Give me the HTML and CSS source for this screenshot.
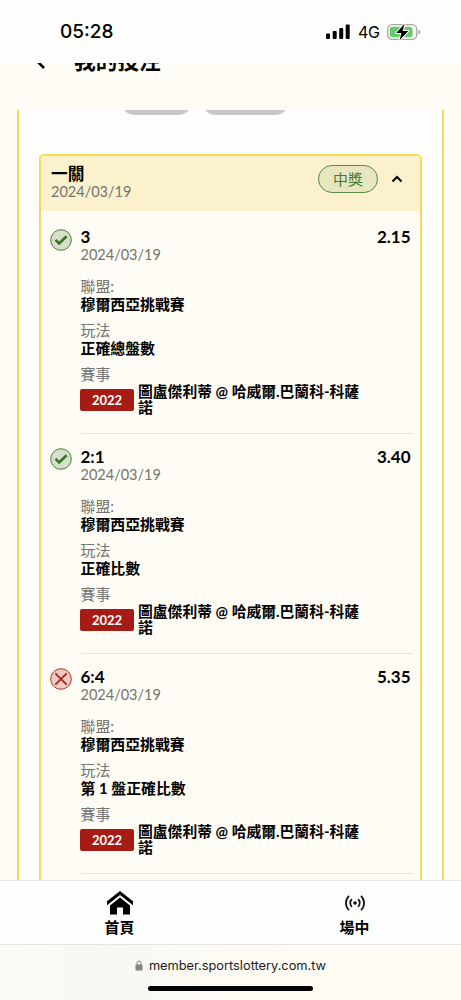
FILE: index.html
```html
<!DOCTYPE html>
<html lang="zh-Hant">
<head>
<meta charset="utf-8">
<meta name="viewport" content="width=device-width, initial-scale=1">
<title>我的投注</title>
<link rel="stylesheet" href="styles.css">
</head>
<body>
<div class="phone">
  <header class="status">
    <span class="clock">05:28</span>
    <div class="indicators">
      <svg class="signal" viewBox="0 0 24 16"><rect x="0" y="9.500" width="4" height="5.500" rx="1"/><rect x="6.700" y="7" width="4" height="8" rx="1"/><rect x="13.200" y="4" width="4" height="11" rx="1"/><rect x="19.700" y="0.500" width="4" height="14.500" rx="1"/></svg>
      <span class="network">4G</span>
      <svg class="battery" viewBox="0 0 34 18"><rect x="0.700" y="1.700" width="29" height="14.600" rx="4.600" fill="none" stroke="#a9a9a9" stroke-width="1.300"/><path d="M31.300 6.500c2.700.7 2.700 4.300 0 5z" fill="#a9a9a9"/><rect x="2.700" y="3.700" width="22.800" height="10.600" rx="2.800" fill="#67ca68"/><path d="M17.500.8 9.200 10h5.200l-1.800 7.200L21.300 8h-5.600z" fill="#000" stroke="#fff" stroke-width="2" paint-order="stroke" stroke-linejoin="round"/></svg>
    </div>
  </header>
  <div class="titlebar">
    <svg class="back" viewBox="0 0 12 18"><path d="M10 2 3 9l7 7" fill="none" stroke="#000" stroke-width="2.600"/></svg>
    <h1>我的投注</h1>
  </div>
  <main class="content">
    <div class="panel">
      <div class="filters"><span class="chip chip-a"></span><span class="chip chip-b"></span></div>
      <section class="card">
        <div class="card-head">
          <div><div class="leg">一關</div><div class="date">2024/03/19</div></div>
          <span class="won">中獎</span>
          <svg class="chevron" viewBox="0 0 12 8"><path d="M1.500 6.500 6 2l4.500 4.500" fill="none" stroke="#000" stroke-width="2"/></svg>
        </div>
        <div class="bets">
          <article class="bet">
            <svg class="mark" viewBox="0 0 22 22"><circle cx="11" cy="11" r="10.300" fill="#d5dfcb" stroke="#4a8139"/><path d="m5.500 10.800 3.700 3.700 7.400-7.300" fill="none" stroke="#397322" stroke-width="2.600"/></svg>
            <div class="detail">
              <div class="pick"><b>3</b><b class="odds">2.15</b></div>
              <div class="date">2024/03/19</div>
              <dl><dt>聯盟:</dt><dd>穆爾西亞挑戰賽</dd><dt>玩法</dt><dd>正確總盤數</dd><dt>賽事</dt></dl>
              <div class="match"><span class="code">2022</span><p>圖盧傑利蒂 @ 哈威爾.巴蘭科-科薩<br>諾</p></div>
            </div>
          </article>
          <article class="bet">
            <svg class="mark" viewBox="0 0 22 22"><circle cx="11" cy="11" r="10.300" fill="#d5dfcb" stroke="#4a8139"/><path d="m5.500 10.800 3.700 3.700 7.400-7.300" fill="none" stroke="#397322" stroke-width="2.600"/></svg>
            <div class="detail">
              <div class="pick"><b>2:1</b><b class="odds">3.40</b></div>
              <div class="date">2024/03/19</div>
              <dl><dt>聯盟:</dt><dd>穆爾西亞挑戰賽</dd><dt>玩法</dt><dd>正確比數</dd><dt>賽事</dt></dl>
              <div class="match"><span class="code">2022</span><p>圖盧傑利蒂 @ 哈威爾.巴蘭科-科薩<br>諾</p></div>
            </div>
          </article>
          <article class="bet">
            <svg class="mark" viewBox="0 0 22 22"><circle cx="11" cy="11" r="10.300" fill="#eccbc3" stroke="#b53831"/><path d="m5.300 5.300 11.400 11.400m0-11.400L5.300 16.700" fill="none" stroke="#ac241d" stroke-width="1.800"/></svg>
            <div class="detail">
              <div class="pick"><b>6:4</b><b class="odds">5.35</b></div>
              <div class="date">2024/03/19</div>
              <dl><dt>聯盟:</dt><dd>穆爾西亞挑戰賽</dd><dt>玩法</dt><dd>第 1 盤正確比數</dd><dt>賽事</dt></dl>
              <div class="match"><span class="code">2022</span><p>圖盧傑利蒂 @ 哈威爾.巴蘭科-科薩<br>諾</p></div>
            </div>
          </article>
        </div>
      </section>
    </div>
  </main>
  <nav class="tabs">
    <a class="tab">
      <svg class="home" viewBox="0 0 26 24"><path d="M13 0 26 10.200v4L13 4 0 14.200v-4z"/><path d="m13 6.500 10 8v9h-7v-7h-6v7H3v-9z"/></svg>
      <span>首頁</span>
    </a>
    <a class="tab">
      <svg class="live" viewBox="0 0 20 16" fill="none" stroke="#111" stroke-width="1.700"><circle cx="10" cy="8" r="1.800" fill="#111" stroke="none"/><path d="M6.900 4.200a5.200 5.200 0 0 0 0 7.600M13.100 4.200a5.200 5.200 0 0 1 0 7.600M4 .8a10 10 0 0 0 0 14.400M16 .8a10 10 0 0 1 0 14.400"/></svg>
      <span>場中</span>
    </a>
  </nav>
  <footer class="browser">
    <div class="address"><svg class="lock" viewBox="0 0 8 11"><rect x="0.500" y="4.500" width="7" height="6" rx="1" fill="#858585"/><path d="M2 5V3a2 2 0 0 1 4 0v2" fill="none" stroke="#858585"/></svg><span>member.sportslottery.com.tw</span></div>
    <div class="handle"></div>
  </footer>
</div>
</body>
</html>
```
FILE: styles.css
```css
* { box-sizing: border-box; }
body, h1, p, dl, dd { margin: 0; }
body {
  font-family: Lato, "Noto Sans CJK TC", sans-serif;
  font-size: 14.9px;
  color: #000;
  background: #fefcf5;
}
svg { display: block; flex: none; }
.phone { height: 1000px; display: flex; flex-direction: column; overflow: hidden; }
.status {
  height: 63px; flex: none; background: #fefefe;
  display: flex; justify-content: space-between; align-items: center;
  padding: 0 40px 0 60px; font-family: Inter, sans-serif;
}
.clock { font-size: 19px; font-weight: 500; letter-spacing: 0; }
.indicators { display: flex; align-items: center; }
.signal { width: 24px; height: 16px; }
.network { font-size: 16px; margin-left: 8px; width: 22px; letter-spacing: -0.3px; }
.battery { width: 34px; height: 18px; margin-left: 7px; }
.titlebar { height: 47px; flex: none; overflow: hidden; display: flex; padding-left: 34px; }
.back { width: 12px; height: 18px; margin-top: -11px; }
.titlebar h1 { margin: -15px 0 0 28px; font-size: 21.700px; line-height: 26px; font-weight: 700; }
.content { height: 770px; flex: none; overflow: hidden; padding: 0 17px; }
.panel { border: solid #f8d958; border-width: 0 2px; background: #fefefe; padding: 0 20px; height: 770px; }
.filters { height: 44px; display: flex; gap: 10px; padding-left: 82px; overflow: hidden; }
.chip { height: 28px; margin-top: -23px; border-radius: 14px; background: #c8c8c8; }
.chip-a { width: 71px; }
.chip-b { width: 87px; }
.card { border: 2px solid #f8d958; border-radius: 5px; background: #fefcf5; height: 960px; overflow: hidden; }
.card-head { height: 54.500px; background: #fbf2cd; display: flex; padding: 9px 17px 0 10px; line-height: 18px; }
.leg { font-size: 16.700px; font-weight: 700; }
.date { color: #73736f; font-size: 14.500px; line-height: 18px; }
.won {
  margin-left: auto; height: 28px; width: 60px; border: 1px solid #5a8b49; border-radius: 14px;
  background: #e8e6bf; color: #447b31; text-align: center; line-height: 27px;
}
.chevron { width: 12px; height: 8px; margin: 10px 0 0 13px; }
.bets { padding-top: 4px; }
.bet { display: flex; padding: 0 7px 0 9px; gap: 8.500px; }
.mark { width: 22px; height: 22px; margin-top: 14px; }
.detail { flex: 1; height: 219.800px; padding-top: 13.500px; border-bottom: 1px solid #e3e1db; }
.pick { display: flex; justify-content: space-between; font-size: 17px; line-height: 18px; }
.odds { padding-right: 2.500px; }
dl { margin-top: 13px; line-height: 18px; }
dt { color: #73736f; }
dd { font-weight: 700; margin-bottom: 8px; }
.match { display: flex; align-items: center; gap: 4px; margin: 2px 0 0 -0.500px; }
.code { width: 54px; height: 22px; border-radius: 2px; background: #a61c14; color: #fff; font-size: 13px; font-weight: 700; line-height: 22px; text-align: center; }
.match p { font-size: 14.800px; font-weight: 700; line-height: 16px; white-space: nowrap; margin-top: -2px; }
.tabs { height: 65px; flex: none; border: solid #e4e4e2; border-width: 1px 0; background: #fefefe; display: flex; padding: 0 2px; }
.tab { width: 235px; flex: none; display: flex; flex-direction: column; align-items: center; font-weight: 700; line-height: 20px; }
.home { width: 26px; height: 24px; margin: 10px 0 2px; }
.live { width: 20px; height: 16px; margin: 14px 0 6px; }
.browser { flex: 1; display: flex; flex-direction: column; align-items: center; background: linear-gradient(90deg, #fcfaf4, #f8f7f1 24%, #fdfbf4 50%, #fefcf5); }
.address { display: flex; align-items: center; gap: 6px; height: 41px; font: 12.800px Inter, sans-serif; color: #1b1b1b; }
.lock { width: 8px; height: 11px; }
.handle { width: 165px; height: 5px; border-radius: 3px; background: #000; }
```
